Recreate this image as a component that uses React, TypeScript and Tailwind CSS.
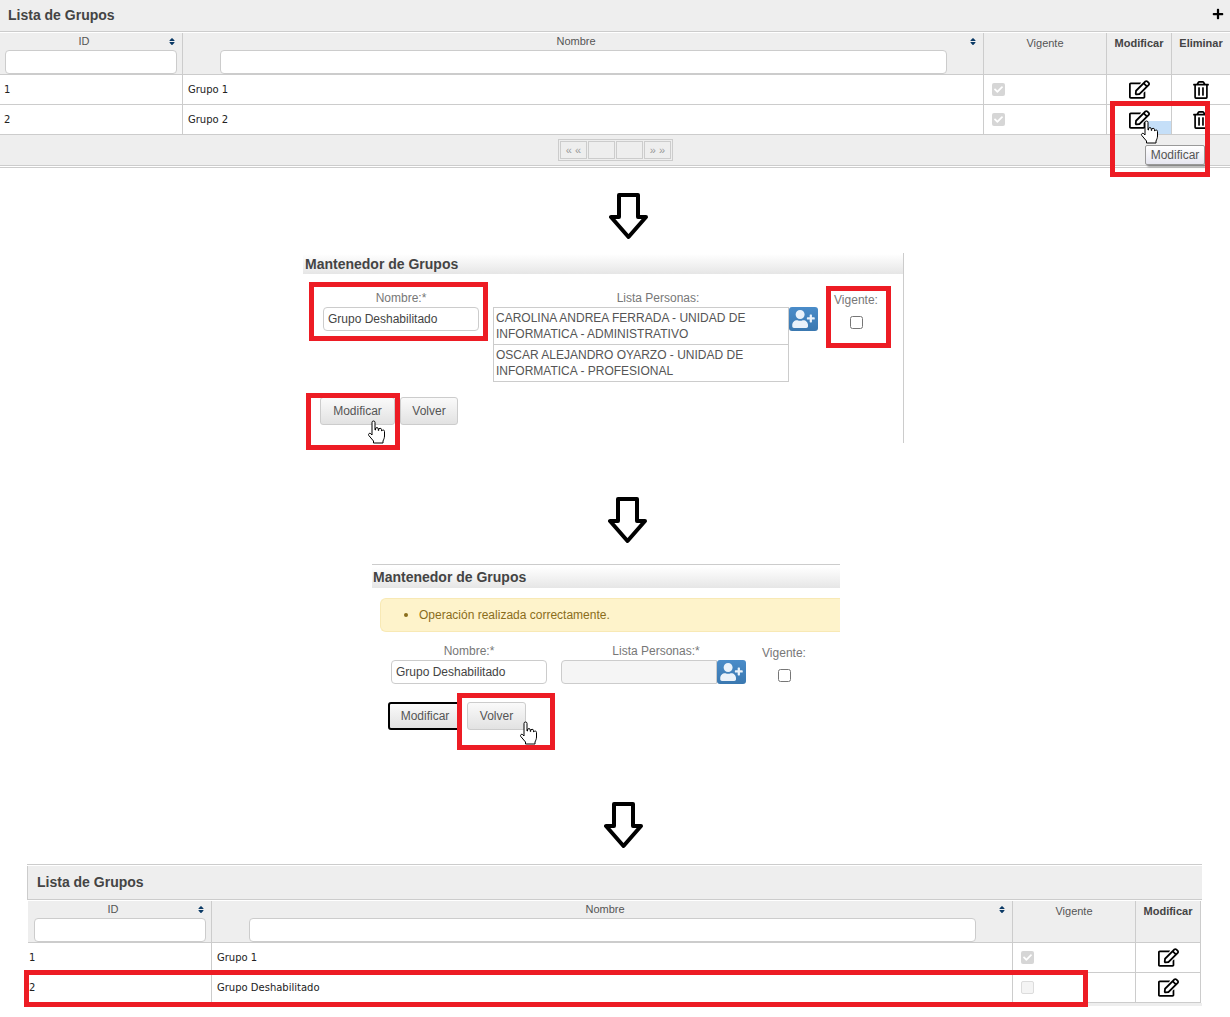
import React from "react";
import { FaCheck, FaPlus, FaRegEdit, FaRegTrashAlt, FaSort, FaUserPlus } from "react-icons/fa";

const Hand = ({ className }: { className: string }) => (
  <svg viewBox="0 0 18 24" className={className}>
    <path
      d="M5 2.5a1.5 1.5 0 0 1 3 0V10h.5V9a1.4 1.4 0 0 1 2.8 0v1.5h.4v-.8a1.4 1.4 0 0 1 2.8 0v1.2h.3a1.4 1.4 0 0 1 2.7.5V16c0 2-.8 3.5-1.5 5v2H6.5v-2L1.8 15.5c-1-1.4.7-3 2-1.8L5 15z"
      fill="#fff"
      stroke="#000"
      strokeWidth="1"
    />
  </svg>
);

const DownArrow = ({ className }: { className: string }) => (
  <svg viewBox="0 0 39 47" className={`block w-[39px] h-[47px] ${className}`}>
    <path d="M10 2h19v22h8L19.5 44 2 24h8z" fill="#fff" stroke="#000" strokeWidth="4" strokeLinejoin="round" />
  </svg>
);

const RedBox = ({ className }: { className: string }) => (
  <div className={`absolute border-[5px] border-[#ed1c24] ${className}`} />
);

const TableCheck = ({ on }: { on: boolean }) =>
  on ? (
    <span className="w-[13px] h-[13px] rounded-[2px] bg-[#d6d6d6] flex items-center justify-center">
      <FaCheck className="w-[9px] h-[9px] text-white" />
    </span>
  ) : (
    <span className="w-[13px] h-[13px] rounded-[2px] bg-[#f4f4f4] border border-[#dcdcdc]" />
  );

const HeadLabel = ({ label }: { label: string }) => (
  <div className="flex items-center h-[17px] pr-[6px]">
    <span className="flex-1 text-center text-[11px] text-[#555]">{label}</span>
    <FaSort className="w-[8px] h-[9px] text-[#0b3a66]" />
  </div>
);

const FilterInput = ({ className }: { className: string }) => (
  <input className={`block h-[24px] bg-white border border-[#ccc] rounded-[4px] ${className}`} />
);

type Row = { id: string; name: string; on: boolean };

const GroupGrid = ({
  cols,
  lead,
  rows,
  withDelete,
}: {
  cols: string;
  lead: string;
  rows: Row[];
  withDelete: boolean;
}) => (
  <div className={`grid ${cols}`}>
    <div className={`h-[42px] bg-[#eee] border-r border-b border-[#ccc] ${lead}`}>
      <HeadLabel label="ID" />
      <FilterInput className="ml-[5px] w-[172px]" />
    </div>
    <div className="h-[42px] bg-[#eee] border-r border-b border-[#ccc]">
      <HeadLabel label="Nombre" />
      <FilterInput className="ml-[37px] w-[727px]" />
    </div>
    <div className="h-[42px] bg-[#eee] border-r border-b border-[#ccc] pt-[2px] text-center text-[11px] text-[#555]">
      Vigente
    </div>
    <div className="h-[42px] bg-[#eee] border-r border-b border-[#ccc] pt-[2px] text-center text-[11px] font-bold text-[#444]">
      Modificar
    </div>
    {withDelete && (
      <div className="h-[42px] bg-[#eee] border-b border-[#ccc] pt-[2px] text-center text-[11px] font-bold text-[#444]">
        Eliminar
      </div>
    )}
    {rows.map((r) => (
      <React.Fragment key={r.id}>
        <div className={`h-[30px] border-r border-b border-[#ccc] flex items-center pl-[4px] text-[10px] text-[#222] font-['DejaVu_Sans',sans-serif] ${lead}`}>
          {r.id}
        </div>
        <div className="h-[30px] border-r border-b border-[#ccc] flex items-center pl-[5px] text-[10px] text-[#222] font-['DejaVu_Sans',sans-serif]">
          {r.name}
        </div>
        <div className="h-[30px] border-r border-b border-[#ccc] flex items-center pl-[8px]">
          <TableCheck on={r.on} />
        </div>
        <div className="h-[30px] border-r border-b border-[#ccc] flex items-center justify-center">
          <FaRegEdit className="w-[21px] h-[19px] text-black" />
        </div>
        {withDelete && (
          <div className="h-[30px] border-b border-[#ccc] flex items-center justify-center">
            <FaRegTrashAlt className="w-[16px] h-[18px] text-black" />
          </div>
        )}
      </React.Fragment>
    ))}
  </div>
);

const GrayButton = ({ label, className }: { label: string; className: string }) => (
  <button className={`h-[28px] rounded-[3px] border text-[12px] text-[#555] bg-gradient-to-b from-[#fafafa] to-[#e2e2e2] ${className}`}>
    {label}
  </button>
);

const AddButton = () => (
  <span className="w-[29px] h-[24px] rounded-[3px] bg-gradient-to-b from-[#4a8cc9] to-[#3a78b0] flex items-center justify-center">
    <FaUserPlus className="w-[23px] h-[18px] text-[#eaf2fa]" />
  </span>
);

const PanelTitle = ({ className }: { className: string }) => (
  <div className={`flex items-center text-[14px] font-bold text-[#444] bg-gradient-to-b from-white to-[#e6e6e6] ${className}`}>
    Mantenedor de Grupos
  </div>
);

const TextField = ({ value }: { value: string }) => (
  <input
    defaultValue={value}
    className="block w-[156px] h-[24px] px-[4px] bg-white border border-[#ccc] rounded-[4px] text-[12px] text-[#444]"
  />
);

export default function App() {
  return (
    <div className="relative w-[1230px] h-[1017px] overflow-hidden bg-white font-['Liberation_Sans',Arial,sans-serif]">
      {/* lista original */}
      <section>
        <div className="h-[32px] bg-[#eee] border-b border-[#ccc] flex items-center justify-between pl-[8px] pr-[6px]">
          <span className="text-[14px] font-bold text-[#444]">Lista de Grupos</span>
          <FaPlus className="w-[12px] h-[12px] text-black mb-[3px]" />
        </div>
        <div className="mt-px">
          <GroupGrid
            cols="grid-cols-[183px_801px_123px_65px_58px]"
            lead=""
            withDelete
            rows={[
              { id: "1", name: "Grupo 1", on: true },
              { id: "2", name: "Grupo 2", on: true },
            ]}
          />
        </div>
        <div className="h-[31px] bg-[#eee] border-b border-[#ccc] flex justify-center pt-[4px] pl-[1px]">
          <div className="flex gap-px h-[22px] border border-[#ccc] p-px">
            <span className="w-[27px] border border-[#ccc] flex items-center justify-center text-[11px] leading-none text-[#999]">« «</span>
            <span className="w-[27px] border border-[#ccc]" />
            <span className="w-[27px] border border-[#ccc]" />
            <span className="w-[27px] border border-[#ccc] flex items-center justify-center text-[11px] leading-none text-[#999]">» »</span>
          </div>
        </div>
        <div className="mt-px h-px bg-[#ccc]" />
      </section>

      <DownArrow className="ml-[609px] mt-[25px]" />

      {/* formulario de modificacion */}
      <section className="ml-[303px] mt-[13px] w-[601px] h-[190px] border-r border-[#ccc] pt-px">
        <PanelTitle className="h-[20px] pl-[2px]" />
        <div className="flex items-start mt-[17px]">
          <div className="ml-[20px] w-[156px]">
            <div className="h-[16px] leading-[14px] text-center text-[12px] text-[#777]">Nombre:*</div>
            <TextField value="Grupo Deshabilitado" />
          </div>
          <div className="ml-[14px] w-[330px]">
            <div className="h-[16px] leading-[14px] text-center text-[12px] text-[#777]">Lista Personas:</div>
            <div className="flex items-start">
              <div className="w-[296px] border border-[#ccc] text-[12px] leading-[16px] text-[#555]">
                <div className="h-[37px] px-[2px] pt-[2px] border-b border-[#ccc]">
                  CAROLINA ANDREA FERRADA - UNIDAD DE INFORMATICA - ADMINISTRATIVO
                </div>
                <div className="h-[36px] px-[2px] pt-[2px]">
                  OSCAR ALEJANDRO OYARZO - UNIDAD DE INFORMATICA - PROFESIONAL
                </div>
              </div>
              <AddButton />
            </div>
          </div>
          <div className="ml-[3px] w-[60px] flex flex-col items-center pt-[2px]">
            <div className="h-[23px] leading-[14px] text-[12px] text-[#777]">Vigente:</div>
            <input type="checkbox" className="block w-[13px] h-[13px]" />
          </div>
        </div>
        <div className="flex gap-[5px] ml-[17px] mt-[15px]">
          <GrayButton label="Modificar" className="w-[75px] border-[#ccc]" />
          <GrayButton label="Volver" className="w-[58px] border-[#ccc]" />
        </div>
      </section>

      <DownArrow className="ml-[608px] mt-[54px]" />

      {/* resultado de la operacion */}
      <section className="ml-[372px] mt-[20px] w-[468px] h-[168px] border-t border-[#ccc] pt-[2px]">
        <PanelTitle className="h-[21px] pl-[1px]" />
        <div className="ml-[8px] mt-[10px] h-[34px] bg-[#fef3cb] border border-r-0 border-[#f8e9b5] rounded-l-[6px] flex items-center pl-[23px] text-[12px] text-[#8a6d1b]">
          <span className="w-[4px] h-[4px] rounded-full bg-[#8a6d1b] mr-[11px]" />
          Operación realizada correctamente.
        </div>
        <div className="flex items-start mt-[12px]">
          <div className="ml-[19px] w-[156px]">
            <div className="h-[16px] leading-[14px] text-center text-[12px] text-[#777]">Nombre:*</div>
            <TextField value="Grupo Deshabilitado" />
          </div>
          <div className="ml-[14px] w-[190px]">
            <div className="h-[16px] leading-[14px] text-center text-[12px] text-[#777]">Lista Personas:*</div>
            <div className="flex items-start">
              <span className="w-[156px] h-[24px] bg-[#f5f5f5] border border-[#ccc] rounded-l-[4px]" />
              <AddButton />
            </div>
          </div>
          <div className="ml-[3px] w-[60px] flex flex-col items-center pt-[2px]">
            <div className="h-[23px] leading-[14px] text-[12px] text-[#777]">Vigente:</div>
            <input type="checkbox" className="block w-[13px] h-[13px]" />
          </div>
        </div>
        <div className="flex gap-[5px] ml-[16px] mt-[18px]">
          <GrayButton label="Modificar" className="w-[74px] border-2 border-black" />
          <GrayButton label="Volver" className="w-[59px] border-[#ccc]" />
        </div>
      </section>

      <DownArrow className="ml-[604px] mt-[70px]" />

      {/* lista actualizada */}
      <section className="ml-[27px] mt-[15px] w-[1175px]">
        <div className="h-px bg-[#ccc]" />
        <div className="mt-px h-[34px] bg-[#eee] border-l border-b border-[#ccc] flex items-center pl-[9px]">
          <span className="text-[14px] font-bold text-[#444]">Lista de Grupos</span>
        </div>
        <div className="mt-px ml-[1px]">
          <GroupGrid
            cols="grid-cols-[184px_801px_123px_65px]"
            lead="pl-px"
            withDelete={false}
            rows={[
              { id: "1", name: "Grupo 1", on: true },
              { id: "2", name: "Grupo Deshabilitado", on: false },
            ]}
          />
        </div>
        <div className="h-[3px] bg-[#eee]" />
      </section>

      {/* anotaciones sobre la captura */}
      <div className="absolute left-[1145px] top-[121px] w-[26px] h-[13px] bg-[#c5dff8]" />
      <div className="absolute left-[1145px] top-[145px] w-[60px] h-[20px] flex items-center justify-center rounded-[2px] border border-[#999] bg-gradient-to-b from-white to-[#e6e6f0] shadow-[2px_2px_2px_rgba(0,0,0,0.35)] text-[12px] text-[#555]">
        Modificar
      </div>
      <RedBox className="left-[1110px] top-[101px] w-[100px] h-[76px]" />
      <RedBox className="left-[309px] top-[282px] w-[179px] h-[59px]" />
      <RedBox className="left-[826px] top-[286px] w-[65px] h-[62px]" />
      <RedBox className="left-[306px] top-[393px] w-[94px] h-[57px]" />
      <RedBox className="left-[457px] top-[693px] w-[98px] h-[57px]" />
      <RedBox className="left-[24px] top-[970px] w-[1064px] h-[37px]" />
      <Hand className="absolute left-[1140px] top-[120px] w-[18px] h-[24px]" />
      <Hand className="absolute left-[367px] top-[420px] w-[18px] h-[24px]" />
      <Hand className="absolute left-[519px] top-[721px] w-[18px] h-[24px]" />
    </div>
  );
}
